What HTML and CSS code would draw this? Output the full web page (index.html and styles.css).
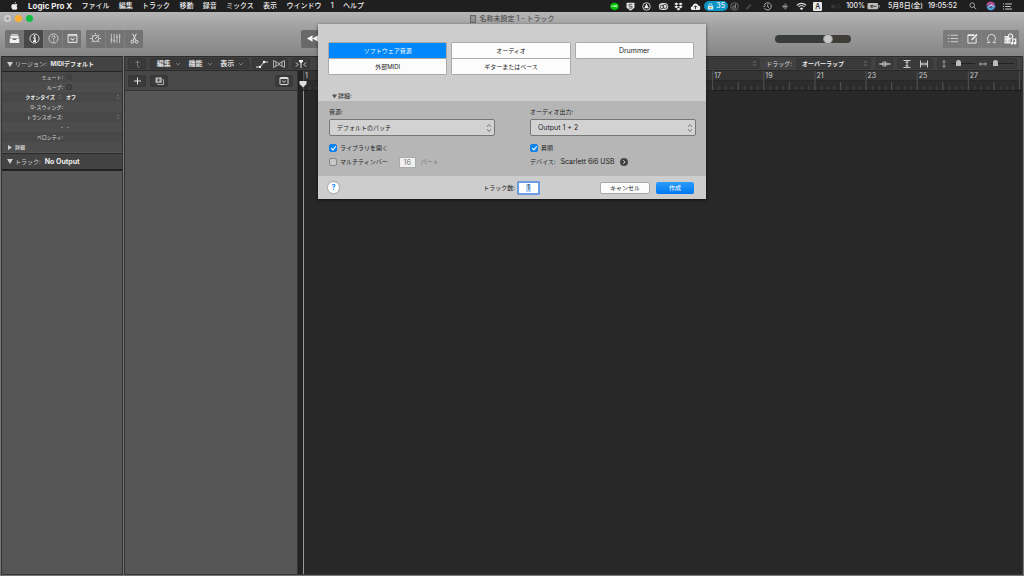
FILE: index.html
```html
<!DOCTYPE html>
<html lang="ja">
<head>
<meta charset="utf-8">
<meta name="viewport" content="width=device-width, initial-scale=1">
<title>名称未設定 1 - トラック</title>
<link rel="stylesheet" href="styles.css">
</head>
<body>
<svg class="defs" width="0" height="0" aria-hidden="true">
  <defs>
    <symbol id="updown" viewBox="0 0 6 10"><path d="M1 4 3 1.400 5 4M1 6 3 8.600 5 6" fill="none" stroke="currentColor" stroke-width=".9"/></symbol>
    <symbol id="chev" viewBox="0 0 6 4"><path d="M1 1 3 3 5 1" fill="none" stroke="currentColor" stroke-width=".8"/></symbol>
    <symbol id="tri" viewBox="0 0 6 5"><path d="M0 0h6L3 5z" fill="currentColor"/></symbol>
    <symbol id="trir" viewBox="0 0 4 5"><path d="M0 0v5L4 2.500z" fill="currentColor"/></symbol>
    <symbol id="panel" viewBox="0 0 10 10"><rect x="1" y="1.500" width="8" height="7" rx=".6" fill="none" stroke="currentColor"/><path d="M1 2.500h8" stroke="currentColor"/><path d="M3.200 4.700 5 6.400 6.800 4.700" fill="none" stroke="currentColor"/></symbol>
  </defs>
</svg>

<header class="menubar">
  <svg class="apple" viewBox="0 0 14 16"><path d="M9.800 0C8.400.2 7 1.600 7.200 3.400 8.700 3.400 10 1.800 9.800 0zM11.400 8.400c0-1.700 1.300-2.500 1.500-2.700-1-1.500-2.600-1.500-3-1.500-1.300 0-2.200.7-2.800.7S5.400 4.200 4.400 4.200C2.400 4.200.7 6 .7 8.900.7 12 2.900 15.500 4.600 15.500c.9 0 1.400-.6 2.600-.6s1.500.6 2.500.6c1.600 0 3-2.600 3.400-3.900-.2-.1-1.700-.9-1.700-3.200z" fill="#eee"/></svg>
  <nav class="menus">
    <a class="app" href="#">Logic Pro X</a><a href="#">ファイル</a><a href="#">編集</a><a href="#">トラック</a><a href="#">移動</a><a href="#">録音</a><a href="#">ミックス</a><a href="#">表示</a><a href="#">ウインドウ</a><a href="#">1</a><a href="#">ヘルプ</a>
  </nav>
  <div class="status">
    <svg class="si" viewBox="0 0 10 10"><ellipse cx="5" cy="4.600" rx="4.600" ry="3.900" fill="#00c300"/><path d="M3 7.500 5 9.800 7 7.500z" fill="#00c300"/><path d="M2 3.600v2h1M4 3.600v2M5 5.600v-2l1 2v-2M8 3.600H7v2h1M7 4.600h1" fill="none" stroke="#fff" stroke-width=".6"/></svg>
    <svg class="si" viewBox="0 0 10 10"><path d="M.6.800h8.800v5.500L5 9.800.600 6.300z" fill="#e4e4e4"/><path d="M7 2.600H3.400v2.200h3.200v2H3" fill="none" stroke="#333" stroke-width=".8"/></svg>
    <svg class="si" viewBox="0 0 10 10"><circle cx="5" cy="5" r="4.200" fill="none" stroke="#ddd"/><path d="M5 1.800 7.600 7H2.400z" fill="#eee"/></svg>
    <svg class="si wide" viewBox="0 0 12 10"><rect x=".8" y="1" width="10.400" height="8" rx="4" fill="#ddd"/><circle cx="4.300" cy="5.500" r="2" fill="none" stroke="#222" stroke-width=".8"/><circle cx="7.600" cy="4.900" r="2.300" fill="none" stroke="#222" stroke-width=".8"/></svg>
    <svg class="si" viewBox="0 0 10 10"><path d="M2.600.5 5 2.100 2.600 3.700.200 2.100zM7.400.5l2.400 1.600-2.400 1.600L5 2.100zM2.600 3.800 5 5.400 2.600 7 .200 5.400zM7.400 3.800l2.400 1.600L7.400 7 5 5.400zM5 6.400l2.200 1.500L5 9.500 2.800 7.900z" fill="#eee"/></svg>
    <svg class="si wide" viewBox="0 0 12 10"><path d="M3.300 9C-.4 9 .2 4.600 2.800 4.600 3 1 8.300.4 9 4c3.200.2 3 5 .2 5z" fill="#eee"/><path d="M6 8V4.500M4.400 5.800 6 4.200l1.600 1.600" fill="none" stroke="#222"/></svg>
    <span class="pill"><svg viewBox="0 0 8 8"><path d="M2.300 4V2.500a1.700 1.700 0 0 1 3.400 0V4" fill="none" stroke="#dcefff"/><rect x="1" y="3.400" width="6" height="4" fill="#dcefff"/><path d="M2.500 5.400h3" stroke="#a88a20"/></svg>35</span>
    <svg class="si" viewBox="0 0 10 10"><circle cx="5" cy="5" r="4.200" fill="none" stroke="#888" stroke-width=".8"/><circle cx="4.500" cy="5.600" r="1.500" fill="none" stroke="#999" stroke-width=".8"/><path d="M6.100 2v5.200" stroke="#999" stroke-width=".8"/></svg>
    <svg class="si pen" viewBox="0 0 10 10"><path d="M2 8.500 2.800 6 6.800 2 8.500 3.600 4.500 7.700z" fill="#454545"/></svg>
    <svg class="si clock" viewBox="0 0 10 10"><path d="M1.700 6.800A4 4 0 1 0 1.400 3.600M.2 4.200l1.200 1.300L2.800 4.200M5.200 2.700V5.300l1.600 1" fill="none" stroke="#ccc" stroke-width=".9"/></svg>
    <svg class="si blue" viewBox="0 0 10 10"><path d="M2.500 3.200 7.300 6.500 5 8.500v-7l2.300 2L2.500 6.800M1 5h8" fill="none" stroke="#999" stroke-width=".9"/></svg>
    <svg class="si wifi" viewBox="0 0 12 10"><path d="M.8 3.700a7.400 7.400 0 0 1 10.400 0M2.600 5.500a5 5 0 0 1 6.800 0" fill="none" stroke="#ddd" stroke-width="1.200"/><path d="M4 7a3 3 0 0 1 4 0L6 9.300z" fill="#ddd"/></svg>
    <span class="ime">A</span>
    <svg class="si vol" viewBox="0 0 12 10"><path d="M1 4h1.500L5 2v6L2.500 6H1z" fill="#3d3d3d"/><path d="M6.500 3.500q1 1.500 0 3M8.200 2.500q1.800 2.500 0 5M10 1.500q2.400 3.500 0 7" fill="none" stroke="#3d3d3d" stroke-width=".7"/></svg>
    <span class="pct">100%</span>
    <svg class="batt" viewBox="0 0 13 8"><rect x=".5" y="1" width="10.500" height="6.200" rx="1" fill="#bbb"/><path d="M12 3v2.500" stroke="#bbb"/><path d="M4 3v2.500M4 3.500h2q1.500.8 0 1.600H4M7 4.300h2.500" fill="none" stroke="#222" stroke-width=".8"/></svg>
    <time class="date">5月8日(金)</time>
    <time class="time">19:05:52</time>
    <svg class="si find" viewBox="0 0 10 10"><circle cx="4" cy="4" r="2.900" fill="none" stroke="#ccc" stroke-width=".9"/><path d="M6.200 6.200 9 9" stroke="#ccc"/></svg>
    <svg class="si siri" viewBox="0 0 10 10"><circle cx="5" cy="5" r="4.600" fill="#5b5296"/><path d="M1 4q3-5 7 0" fill="none" stroke="#e34b8c" stroke-width="1.400"/><path d="M1.500 6q3.500 5 7-1" fill="none" stroke="#35c3e8" stroke-width="1.400"/><path d="M2.500 5.500 5 3.800 7.500 5.500" fill="none" stroke="#fff"/></svg>
    <svg class="si list" viewBox="0 0 11 10"><path d="M.5 2.200h1.300M3 2.200h7.500M.5 5h1.300M3 5h6M.5 7.800h1.300M3 7.800h7.500" stroke="#ddd"/></svg>
  </div>
</header>

<main class="window">
  <div class="titlebar">
    <div class="lights"><i class="close"></i><i class="min"></i><i class="max"></i></div>
    <h1 class="title"><svg viewBox="0 0 6 8"><rect x=".5" y=".5" width="5" height="7" fill="#999" stroke="#666"/><path d="M2 2h2v2H2zM1.500 6h3" fill="#ccc" stroke="#666" stroke-width=".5"/></svg>名称未設定 1 - トラック</h1>
  </div>

  <div class="toolbar">
    <div class="group">
      <button aria-label="ライブラリ"><svg viewBox="0 0 12 12"><path d="M2.500 1h7v1h-7zM1.500 2.800h9v3h-9z" fill="#eee"/><path d="M.8 6h2.600l1 1.600h3.200L8.600 6h2.600v4.800H.8z" fill="#f2f2f2"/></svg></button>
      <button class="on" aria-label="インスペクタ"><svg viewBox="0 0 12 12"><circle cx="6" cy="6" r="5" fill="none" stroke="#eee"/><path d="M4.700 5.300H6.500V9M4.500 9h3.200" fill="none" stroke="#fff" stroke-width="1.400"/><circle cx="6" cy="3.200" r=".9" fill="#fff"/></svg></button>
      <button aria-label="クイックヘルプ"><svg viewBox="0 0 12 12"><circle cx="6" cy="6" r="5" fill="none" stroke="#ddd" stroke-width=".9"/><path d="M4.300 4.800q0-1.600 1.700-1.600 1.800 0 1.700 1.400Q7.600 5.700 6 6.200v1" fill="none" stroke="#ddd"/><circle cx="6" cy="8.900" r=".6" fill="#ddd"/></svg></button>
      <button aria-label="ツールバー"><svg class="pn"><use href="#panel"/></svg></button>
    </div>
    <div class="group">
      <button aria-label="Smart Control"><svg viewBox="0 0 12 12"><circle cx="6" cy="6" r="3.500" fill="none" stroke="#e2e2e2"/><path d="M5.700 6.300 7.700 4.300M6 0v1.600M1.800 1.800l1.300 1.300M10.200 1.800 8.900 3.100M0 6h1.600M10.400 6H12M1.800 10.200l1.400-1.300M10.200 10.200 8.800 8.900" stroke="#e2e2e2"/></svg></button>
      <button aria-label="ミキサー"><svg viewBox="0 0 12 12"><path d="M1.500 1v10M4.500 1v10M7.500 1v10M10.500 1v10M.4 7.500h2.300M3.400 8.500h2.300M6.400 4.500h2.300M9.400 3.500h2.300" stroke="#ddd" stroke-width=".8"/></svg></button>
      <button aria-label="エディタ"><svg viewBox="0 0 12 12"><path d="M4 .8 7.600 8M8 .8 4.400 8" stroke="#eee"/><circle cx="3.700" cy="9.500" r="1.500" fill="none" stroke="#eee"/><circle cx="8.300" cy="9.500" r="1.500" fill="none" stroke="#eee"/></svg></button>
    </div>
    <div class="group transport">
      <button aria-label="巻き戻し"><svg viewBox="0 0 12 12"><path d="M6 2.500v7L0 6zM12 2.500v7L6 6z" fill="#fff"/></svg></button>
    </div>
    <input class="master" type="range" min="0" max="100" value="72" aria-label="マスター音量">
    <div class="group right">
      <button aria-label="リスト"><svg viewBox="0 0 12 12"><path d="M1 2.500h1.500M4 2.500h8M1 6h1.500M4 6h8M1 9.500h1.500M4 9.500h8" stroke="#e0e0e0" stroke-width=".9"/></svg></button>
      <button aria-label="ノートパッド"><svg viewBox="0 0 12 12"><path d="M8 2H1v9h9V5" fill="none" stroke="#eee"/><path d="M1 2.500h7" stroke="#eee" stroke-width="1.400"/><path d="M5 7.500 11 1.500" stroke="#eee" stroke-width="1.600"/></svg></button>
      <button aria-label="ループ"><svg viewBox="0 0 12 12"><path d="M1 10.500h3.300Q1.600 8.500 1.600 5.800 2 1.500 6 1.400q4 .1 4.400 4.400 0 2.700-2.700 4.700H11" fill="none" stroke="#e4e4e4"/></svg></button>
      <button aria-label="ブラウザ"><svg class="big" viewBox="0 0 13 12"><rect x=".5" y="3" width="6" height="7.500" fill="#eee"/><path d="M1.500 5h1M1.500 8h1M4.500 8h1" stroke="#777"/><circle cx="6.500" cy="3.200" r="2.300" fill="#888" stroke="#fff"/><path d="M8.700 10V6h3v4" fill="none" stroke="#fff" stroke-width="1.200"/><circle cx="8.100" cy="10.200" r="1.200" fill="#fff"/><circle cx="11.100" cy="10.200" r="1.200" fill="#fff"/></svg></button>
    </div>
  </div>

  <div class="workspace">
    <aside class="inspector">
      <h2><svg class="disc"><use href="#tri"/></svg><span>リージョン:</span><b>MIDIデフォルト</b></h2>
      <div class="params">
        <div class="row"><label for="mute">ミュート:</label><input id="mute" class="dim" type="checkbox"></div>
        <div class="row"><label for="loop">ループ:</label><input id="loop" type="checkbox"></div>
        <div class="row quant"><label for="q">クオンタイズ</label><svg class="ud"><use href="#updown"/></svg><select id="q"><option>オフ</option></select><svg class="ud"><use href="#updown"/></svg></div>
        <div class="row"><span>Q-スウィング:</span></div>
        <div class="row"><span>トランスポーズ:</span><svg class="ud end"><use href="#updown"/></svg></div>
        <div class="row dashes"><span>-</span><span>-</span></div>
        <div class="row"><span>ベロシティ:</span></div>
        <div class="row more"><svg><use href="#trir"/></svg><b>詳細</b></div>
      </div>
      <h2 class="track"><svg class="disc"><use href="#tri"/></svg><span>トラック:</span><b class="latin">No Output</b></h2>
    </aside>

    <section class="tracks">
      <div class="bar">
        <button class="tb up" aria-label="上へ"><svg viewBox="0 0 8 8"><path d="M6 7.500Q4 7.500 4 5.500V1M2 3l2-2 2 2" fill="none" stroke="#8a8a8a" stroke-width=".8"/></svg></button>
        <div class="tb menusel">
          <button>編集<svg><use href="#chev"/></svg></button><button>機能<svg><use href="#chev"/></svg></button><button>表示<svg><use href="#chev"/></svg></button>
        </div>
        <div class="tb pair">
          <button aria-label="オートメーション"><svg viewBox="0 0 12 8"><path d="M0 7h4l4-5h4" fill="none" stroke="#ddd"/><circle cx="4" cy="7" r="1.200" fill="#fff"/><circle cx="8" cy="2" r="1.200" fill="#fff"/></svg></button>
          <button aria-label="フレックス"><svg viewBox="0 0 12 8"><path d="M.5.500v7L6 4.500l5.500 3v-7L6 3.500zM3 1.500v5M9 1.500v5M6 3v2" fill="none" stroke="#ccc" stroke-width=".8"/></svg></button>
        </div>
        <button class="tb catch" aria-label="キャッチ"><svg viewBox="0 0 12 8"><path d="M1 2.500 3 4.500 1 6.500M11 2.500 9 4.500l2 2M6 2v6" fill="none" stroke="#ddd"/><path d="M4 0h4v1.500L6 3.500 4 1.500z" fill="#eee"/></svg></button>
        <div class="barend">
          <div class="tb snap"><svg class="ud"><use href="#updown"/></svg></div>
          <label for="drag">ドラッグ:</label>
          <div class="tb dragsel"><select id="drag"><option>オーバーラップ</option></select><svg class="ud"><use href="#updown"/></svg></div>
          <button class="tb wave" aria-label="波形ズーム"><svg viewBox="0 0 12 8"><path d="M0 4h12M2 3.300v1.400M3.500 2.500v3M5 1v6M6.500 1.500v5M8 2.500v3M9.500 3.300v1.400" stroke="#bbb"/></svg></button>
          <div class="tb pair fit">
            <button aria-label="縦に合わせる"><svg viewBox="0 0 8 8"><path d="M.5.500h7M.5 7.500h7M4 1v6M2.500 3 4 1.500 5.500 3M2.500 5 4 6.500 5.500 5" fill="none" stroke="#ddd" stroke-width=".9"/></svg></button>
            <button aria-label="横に合わせる"><svg viewBox="0 0 8 8"><path d="M.5.500v7M7.500.500v7M1 4h6M3 2.500 1.500 4 3 5.500M5 2.500 6.500 4 5 5.500" fill="none" stroke="#ddd" stroke-width=".9"/></svg></button>
          </div>
          <div class="tb zooms">
            <svg viewBox="0 0 8 8"><path d="M4 .5v7M2.500 2.300 4 .6 5.500 2.300M2.500 5.700 4 7.400 5.500 5.700" fill="none" stroke="#999"/></svg>
            <input type="range" min="0" max="100" value="25" aria-label="縦ズーム">
            <svg viewBox="0 0 8 8"><path d="M.5 4h7M2.300 2.500.600 4l1.700 1.500M5.700 2.500 7.400 4 5.700 5.500" fill="none" stroke="#aaa"/></svg>
            <input type="range" min="0" max="100" value="14" aria-label="横ズーム">
          </div>
        </div>
      </div>

      <div class="area">
        <div class="heads">
          <div class="headbar">
            <button class="tb" aria-label="トラックを追加"><svg viewBox="0 0 8 8"><path d="M4 .5v7M.5 4h7" stroke="#ddd"/></svg></button>
            <button class="tb" aria-label="トラックを複製"><svg viewBox="0 0 10 9"><path d="M3 7.500v1h6.500V3H8.500" fill="none" stroke="#bbb"/><rect x=".5" y=".5" width="7" height="6" fill="#bbb"/><path d="M4 1.500v4M2 3.500h4" stroke="#444"/></svg></button>
            <button class="tb last" aria-label="ヘッダ設定"><svg class="hp"><use href="#panel"/></svg></button>
          </div>
        </div>
        <div class="arrange">
          <div class="ruler">
            <svg class="ticks" viewBox="0 0 717 19" preserveAspectRatio="none" aria-hidden="true">
              <defs>
                <pattern id="beat" width="6.402" height="19" patternUnits="userSpaceOnUse"><path d="M.5 15v4" stroke="#444"/></pattern>
                <pattern id="bars" width="51.214" height="19" patternUnits="userSpaceOnUse"><path d="M.5 0v19M26.100 11v8" stroke="#505050"/></pattern>
              </defs>
              <rect width="718" height="19" fill="url(#beat)"/><rect width="718" height="19" fill="url(#bars)"/>
            </svg>
            <div class="nums"><span>1</span><span>3</span><span>5</span><span>7</span><span>9</span><span>11</span><span>13</span><span>15</span><span>17</span><span>19</span><span>21</span><span>23</span><span>25</span><span>27</span></div>
          </div>
          <div class="canvas"></div>
          <svg class="head" viewBox="0 0 8 7"><path d="M.5 0h7v3L4 6.500.500 3z" fill="#ddd"/></svg>
        </div>
      </div>
    </section>
  </div>

  <form class="dialog" role="dialog" aria-label="新規トラック">
    <div class="types">
      <div><button type="button" class="sel">ソフトウェア音源</button><button type="button">外部MIDI</button></div>
      <div><button type="button">オーディオ</button><button type="button">ギターまたはベース</button></div>
      <div><button type="button" class="latin">Drummer</button></div>
    </div>
    <button type="button" class="details"><svg><use href="#tri"/></svg>詳細:</button>
    <div class="options">
      <div class="col">
        <label for="inst">音源:</label>
        <div class="popup"><select id="inst"><option>デフォルトのパッチ</option></select><svg><use href="#updown"/></svg></div>
        <label class="check"><input type="checkbox" checked>ライブラリを開く</label>
        <div class="multi"><label class="check"><input type="checkbox">マルチティンバー</label><input id="parts" class="num" type="text" value="16" disabled><label for="parts" class="off">パート</label></div>
      </div>
      <div class="col">
        <label for="out">オーディオ出力:</label>
        <div class="popup latin"><select id="out"><option>Output 1 + 2</option></select><svg><use href="#updown"/></svg></div>
        <label class="check"><input type="checkbox" checked>昇順</label>
        <div class="device"><span>デバイス:</span><span class="latin">Scarlett 6i6 USB</span><button type="button" aria-label="デバイス設定"><svg viewBox="0 0 8 8"><circle cx="4" cy="4" r="4" fill="#444"/><path d="M3.200 2.200 5 4 3.200 5.800" fill="none" stroke="#ccc"/></svg></button></div>
      </div>
    </div>
    <div class="foot">
      <button type="button" class="help">?</button>
      <label for="count">トラック数:</label><input id="count" type="text" value="1">
      <button type="button" class="cancel">キャンセル</button>
      <button type="button" class="create">作成</button>
    </div>
  </form>
</main>
</body>
</html>
```
FILE: styles.css
```css
* { box-sizing: border-box; }
html, body { height: 100%; margin: 0; }
body {
  display: flex; flex-direction: column; overflow: hidden;
  background: #7a7a7a; color: #222;
  font: 6px/10px Inter, "Noto Sans CJK JP", sans-serif;
}
.defs { position: absolute; }
button, input, select { font: inherit; color: inherit; margin: 0; padding: 0; border: 0; background: none; appearance: none; border-radius: 0; }
svg { display: block; flex: none; }
a { color: inherit; text-decoration: none; }
label, span, time, a, button, h1, h2 { white-space: nowrap; }
.latin { font-size: 7px; }

/* menu bar */
.menubar { display: flex; flex: none; align-items: center; height: 12px; padding: 0 11px; background: #1f1f1f; color: #eee; font-size: 7px; font-weight: 500; }
.apple { width: 7px; height: 8px; }
.menus { display: flex; justify-content: space-between; width: 336px; margin-left: 10px; }
.menus .app { font-size: 8px; font-weight: 700; }
.status { display: flex; align-items: center; margin-left: auto; }
.si { width: 9px; height: 9px; margin-right: 7px; }
.si.wide { width: 11px; margin-right: 5px; }
.status .wide + .pill { margin-left: -2px; }
.pill { display: flex; align-items: center; justify-content: center; gap: 2px; width: 24px; height: 10px; margin-right: 2px; border-radius: 5px; background: #0b93c4; color: #e8f6ff; }
.pill svg { width: 7px; height: 7px; }
.si.pen { margin-right: 10px; margin-left: -2px; }
.si.clock { margin-right: 9px; }
.si.blue { width: 8px; margin-right: 7px; }
.si.wifi { width: 11px; margin-right: 6px; }
.ime { width: 9px; height: 9px; margin-right: 8px; border-radius: 1px; background: #e8e8e8; color: #222; line-height: 9px; text-align: center; }
.si.vol { width: 11px; margin-right: 5px; }
.batt { width: 13px; height: 8px; margin: 0 8px 0 2px; }
.date { margin-right: 5px; }
.time { margin-right: 12px; }
.si.find { width: 8px; height: 8px; margin-right: 9px; }
.si.siri { width: 10px; height: 10px; margin-right: 6px; }
.si.list { width: 11px; margin: 0; }

/* window chrome */
.window { position: relative; display: flex; flex: 1; flex-direction: column; min-height: 0; background: linear-gradient(#b6b6b6, #a2a2a2 14px, #858585 44px, #777 46px); }
.titlebar { display: flex; align-items: center; justify-content: center; height: 13px; }
.lights { position: absolute; left: 4px; top: 3px; display: flex; gap: 4px; }
.lights i { width: 7px; height: 7px; border-radius: 50%; }
.close { border: 2px solid #cfcfcf; background: #999; }
.min { background: #fdae2c; }
.max { background: #12bd45; }
.title { display: flex; align-items: center; gap: 4px; margin: 0; font-size: 7px; font-weight: 400; color: #3c3c3c; }
.title svg { width: 6px; height: 8px; }
.toolbar { display: flex; align-items: center; height: 31px; padding: 0 5px 4px; }
.group { display: flex; height: 18px; margin-right: 5px; border-radius: 2px; overflow: hidden; background: #737373; }
.group button { display: flex; align-items: center; justify-content: center; width: 19px; background: #737373; }
.group button + button { border-left: 1px solid #808080; }
.group.right button { background: #7a7a7a; }
.group .on { border-color: #484848; background: #484848; }
.group svg { width: 11px; height: 11px; color: #ddd; }
.group .big { width: 13px; height: 12px; }
.group.transport { width: 60px; margin-left: 153px; padding-left: 2px; background: #696969; }
.transport button { background: none; }
.master { width: 76px; height: 10px; margin-left: auto; margin-right: 92px; }
.master::-webkit-slider-runnable-track { height: 8px; border-radius: 4px; background: linear-gradient(90deg, #373c39 70%, #403c38 70%); }
.master::-webkit-slider-thumb { appearance: none; width: 10px; height: 10px; margin-top: -1px; border: 1px solid #888; border-radius: 50%; background: #c5c5c5; }
.group.right { margin-right: 0; }

/* panes */
.workspace { display: flex; flex: 1; gap: 1px; min-height: 0; padding: 0 1px 1px; }
.inspector, .tracks { border: 1px solid #333; border-top-color: #2b2b2b; background: #565656; }
.inspector { flex: none; width: 122px; color: #ccc; }
.inspector h2 { display: flex; align-items: center; height: 15px; margin: 0; padding-left: 5px; border-bottom: 1px solid #242424; background: #434343; font-size: 6px; font-weight: 400; }
.inspector h2 span { margin: 0 4px 0 2px; }
.inspector h2 b { color: #eee; }
.inspector h2 .latin { font-size: 7px; }
.inspector h2.track { height: 18px; border-top: 1px solid #2a2a2a; border-bottom: 2px solid #222; }
.params { padding-bottom: 1px; }
.disc { width: 6px; height: 5px; }
.row { display: flex; align-items: center; height: 10px; padding-right: 2px; font-size: 5px; font-weight: 500; background: #4d4d4d; }
.row:nth-child(odd) { background: #484848; }
.row > :first-child { width: 61px; text-align: right; }
.row input { width: 6px; height: 6px; margin-left: 3px; border: 1px solid #383838; border-radius: 2px; background: #434343; }
.row .dim { border-color: #404040; }
.ud { width: 4px; height: 6px; color: #888; }
.quant { font-weight: 700; color: #eee; }
.quant > label:first-child { width: 53px; }
.quant .ud { margin-left: 3px; }
.quant select { flex: 1; margin-left: 4px; }
.ud.end { margin-left: auto; }
.dashes span + span { margin-left: 4px; }
.row.more { gap: 3px; padding-left: 6px; }
.row.more > svg { width: 4px; height: 5px; }

.tracks { display: flex; flex: 1; flex-direction: column; min-width: 0; }
.bar { display: flex; flex: none; align-items: center; height: 14px; padding: 0 5px 0 3px; border-bottom: 1px solid #282828; background: #424242; color: #ddd; }
.tb { display: flex; align-items: center; justify-content: center; height: 11px; border: 1px solid #353535; border-radius: 2px; background: #3a3a3a; }
.tb svg { width: 9px; height: 8px; }
.tb button { display: flex; align-items: center; justify-content: center; }
.up { width: 18px; }
.menusel { width: 99px; margin-left: 4px; padding-left: 2px; }
.menusel button { flex: 1; gap: 4px; font-weight: 700; font-size: 7px; }
.menusel svg { width: 6px; height: 4px; color: #888; }
.pair { width: 36px; margin-left: 3px; }
.pair button { flex: 1; }
.pair button svg { width: 12px; }
.catch { width: 18px; margin-left: 4px; }
.catch svg { width: 12px; }
.barend { display: flex; align-items: center; margin-left: auto; font-size: 6px; }
.tb .ud { width: 5px; height: 7px; }
.snap { width: 60px; margin-right: 6px; justify-content: flex-end; padding-right: 2px; }
.dragsel { width: 75px; margin-left: 4px; padding: 0 2px 0 5px; }
.dragsel select { flex: 1; font-weight: 700; color: #eee; }
.wave { width: 17px; margin-left: 5px; }
.wave svg { width: 12px; }
.fit { margin-left: 4px; }
.fit button svg { width: 8px; }
.zooms { width: 80px; margin-left: 4px; justify-content: space-around; }
.zooms svg { width: 8px; }
.zooms input { width: 24px; height: 8px; }
.zooms input::-webkit-slider-runnable-track { height: 1px; background: #222; }
.zooms input::-webkit-slider-thumb { appearance: none; width: 5px; height: 6px; margin-top: -3px; border-radius: 3px 3px 0 0; background: #bbb; }

.area { display: flex; flex: 1; min-height: 0; }
.heads { flex: none; width: 173px; border-right: 1px solid #333; }
.headbar { display: flex; align-items: center; gap: 4px; height: 20px; padding: 0 4px 0 3px; border-bottom: 1px solid #333; background: #484848; }
.headbar .tb { width: 18px; height: 12px; }
.headbar .tb svg { width: 9px; height: 8px; }
.headbar .last { margin-left: auto; color: #ddd; }
.headbar .tb .hp { width: 10px; height: 10px; }
.arrange { position: relative; display: flex; flex: 1; flex-direction: column; min-width: 0; padding-left: 5px; background: #222; }
.ruler { position: relative; flex: none; height: 20px; padding-right: 3px; border-bottom: 1px solid #1e1e1e; background: linear-gradient(#343434 9px, #242424 9px, #2c2c2c 10px); }
.ticks { position: absolute; left: 0; top: 0; width: calc(100% - 3px); height: 19px; overflow: visible; }
.nums { position: relative; display: grid; grid-template-columns: repeat(14, 1fr); color: #ccc; font-size: 7px; }
.nums span { padding-left: 2px; }
.canvas { flex: 1; border-left: 1px solid #999; background: #282828; }
.head { position: absolute; left: 1px; top: 10px; width: 8px; height: 7px; }

/* new track sheet */
.dialog { position: absolute; top: 12px; left: 0; right: 0; width: 388px; margin: 0 auto; background: #cdcdcd; box-shadow: 0 1px 3px #0009; }
.types { display: grid; grid-template-columns: repeat(3, 1fr); gap: 4px; padding: 18px 12px 0 10px; height: 67px; align-items: start; }
.types div { display: flex; flex-direction: column; gap: 1px; padding: 1px; border-radius: 2px; background: #aaa; }
.types button { height: 15px; background: #fcfcfc; }
.types .sel { background: #0088fc; color: #fff; }
.details { display: flex; align-items: center; gap: 1px; height: 10px; padding-left: 14px; }
.details svg { width: 5px; height: 5px; color: #555; }
.options { display: flex; gap: 35px; padding: 6px 10px 0 11px; height: 75px; background: #b6b6b6; }
.col { display: flex; flex: 1; flex-direction: column; align-items: flex-start; }
.popup { display: flex; align-items: center; width: 100%; height: 17px; margin: 2px 0 7px; padding: 0 2px 0 7px; border: 1px solid #777; border-radius: 2px; background: #d2d2d2; }
.popup select { flex: 1; }
.popup svg { width: 6px; height: 10px; color: #777; }
.check { display: flex; align-items: center; gap: 3px; height: 10px; }
.check input { width: 8px; height: 8px; border: 1px solid #888; border-radius: 2px; background: #c8c8c8; }
.check input:checked { display: grid; place-items: center; border-color: #0c7fe8; background: #0c86f4; }
.check input:checked::after { content: ""; width: 2px; height: 4px; margin-bottom: 1px; border: solid #fff; border-width: 0 1px 1px 0; transform: rotate(40deg); }
.multi, .device { display: flex; align-items: center; height: 10px; margin-top: 4px; }
.num { width: 17px; height: 11px; margin: 0 5px 0 11px; border: 1px solid #aaa; background: #f0f0f0; color: #777; font-size: 7px; text-align: center; }
.off { color: #777; }
.device { gap: 5px; margin-top: 4px; }
.device svg { width: 8px; height: 8px; }
.foot { display: flex; align-items: center; height: 23px; padding: 0 12px 0 10px; }
.help { width: 11px; height: 11px; border-radius: 50%; background: #fff; box-shadow: 0 0 1px 1px #aaa; color: #0a84ff; font-size: 7px; font-weight: 700; line-height: 11px; }
.foot label { margin-left: auto; }
#count { width: 23px; height: 14px; margin: 0 60px 0 2px; border: 2px solid #6a9fe6; border-radius: 1px; background: linear-gradient(#b4d5fb, #b4d5fb) center / 5px 8px no-repeat #fff; text-align: center; font-size: 7px; }
.cancel, .create { height: 12px; border-radius: 2px; }
.cancel { width: 50px; margin-right: 6px; border: 1px solid #aaa; background: #fcfcfc; }
.create { width: 38px; background: linear-gradient(#2c9bfa, #0078f0); color: #fff; }
```
